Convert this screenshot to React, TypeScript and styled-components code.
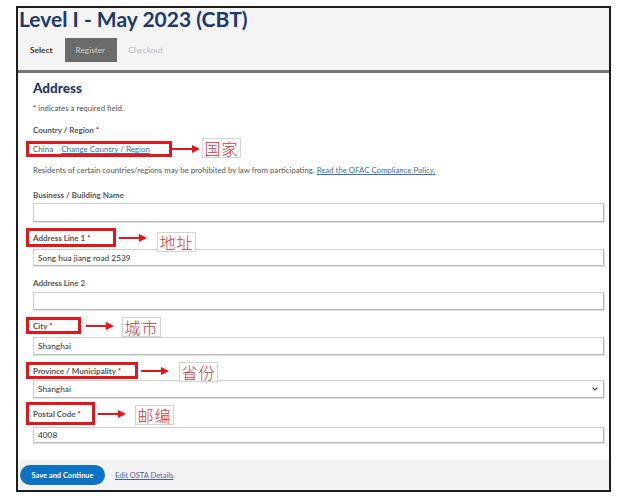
import React from "react";
import styled, { createGlobalStyle } from "styled-components";

const GlobalStyle = createGlobalStyle`
  html, body {
    margin: 0;
    padding: 0;
    background: #fff;
  }
  body {
    font-family: Lato, "Noto Sans", sans-serif;
    color: #444;
  }
`;

type TabState = "done" | "active" | "todo";

const Frame = styled.div`
  box-sizing: border-box;
  margin: 6px 0 0 16px;
  width: 595px;
  height: 486px;
  border: 2px solid #1e1e1e;
  display: flex;
  flex-direction: column;
`;

const Header = styled.header`
  background: #f4f4f4;
  padding: 0 0 8px 1px;
  border-bottom: 3px solid #777;
`;

const Title = styled.h1`
  margin: 1px 0 0;
  font-size: 21px;
  line-height: 20px;
  font-weight: 700;
  color: #1b3a6b;
`;

const Tabs = styled.nav`
  display: flex;
  margin-top: 9px;
  height: 24px;
`;

const Tab = styled.span<{ $state: TabState }>`
  padding: 0 12px 0 11px;
  line-height: 24px;
  font-size: 8.3px;
  font-weight: ${(p) => (p.$state === "done" ? 700 : 400)};
  color: ${(p) =>
    p.$state === "done" ? "#333" : p.$state === "active" ? "#d2d2d2" : "#bdbdbd"};
  background: ${(p) => (p.$state === "active" ? "#6b6b6b" : "transparent")};
`;

const Body = styled.main`
  flex: 1;
  background: #fff;
  padding: 7px 5px 0 15px;
`;

const Heading = styled.h2`
  margin: 0;
  font-size: 13.5px;
  line-height: 16px;
  font-weight: 900;
  color: #1b3a6b;
`;

const Note = styled.p<{ $mt: number }>`
  margin: ${(p) => p.$mt}px 0 0;
  font-size: 7.8px;
  line-height: 12px;
  color: #555;
  white-space: nowrap;
`;

const Req = styled.span`
  color: #d0021b;
`;

const Label = styled.div<{ $mt?: number }>`
  margin-top: ${(p) => p.$mt ?? 0}px;
  font-size: 8px;
  line-height: 12px;
  font-weight: 700;
  color: #555;
  white-space: nowrap;
`;

const Link = styled.a`
  color: #3b6fb6;
  text-decoration: underline;
  cursor: pointer;
`;

const AnnotRow = styled.div<{ $mt: number; $h: number }>`
  display: flex;
  align-items: flex-start;
  height: ${(p) => p.$h}px;
  margin-top: ${(p) => p.$mt}px;
  margin-left: -7px;
`;

const RedBox = styled.div<{ $w: number; $h: number }>`
  box-sizing: border-box;
  width: ${(p) => p.$w}px;
  height: ${(p) => p.$h}px;
  border: 3px solid #e4161c;
  padding-left: 4px;
  display: flex;
  align-items: center;
  gap: 8px;
  font-size: 8px;
  white-space: nowrap;
`;

const Value = styled.span`
  color: #555;
`;

const Arrow = styled.svg<{ $ml: number }>`
  align-self: center;
  flex: none;
  margin-left: ${(p) => p.$ml}px;
`;

const Tag = styled.span<{ $ml: number; $dy: number }>`
  box-sizing: border-box;
  flex: none;
  margin-left: ${(p) => p.$ml}px;
  margin-top: ${(p) => p.$dy}px;
  width: 39px;
  height: 20px;
  border: 1px solid #d4d4d4;
  background: #fff;
  display: flex;
  align-items: center;
  justify-content: center;
  font-family: "Noto Sans CJK SC", sans-serif;
  font-size: 16px;
  font-weight: 300;
  letter-spacing: 1px;
  color: #c9373c;
  position: relative;
  z-index: 1;
`;

const Input = styled.input<{ $mt: number; $h: number }>`
  display: block;
  box-sizing: border-box;
  width: 100%;
  height: ${(p) => p.$h}px;
  margin: ${(p) => p.$mt}px 0 0;
  padding: 0 4px;
  border: 1px solid #d0d0d0;
  border-right-color: #b9b9b9;
  border-bottom-color: #b9b9b9;
  box-shadow: 1px 1px 0 #e2e2e2;
  font-family: Lato, sans-serif;
  font-size: 8.3px;
  color: #333;
  background: #fff;
  outline: none;
`;

const SelectBox = styled.div<{ $mt: number; $h: number }>`
  box-sizing: border-box;
  height: ${(p) => p.$h}px;
  margin-top: ${(p) => p.$mt}px;
  padding: 0 5px 0 4px;
  border: 1px solid #d0d0d0;
  border-right-color: #b9b9b9;
  border-bottom-color: #b9b9b9;
  box-shadow: 1px 1px 0 #e2e2e2;
  display: flex;
  align-items: center;
  justify-content: space-between;
  font-size: 8.3px;
  color: #333;
`;

const Footer = styled.footer`
  height: 30px;
  background: #f3f3f3;
  display: flex;
  align-items: center;
  padding-left: 2px;
  gap: 10px;
`;

const PrimaryButton = styled.button`
  width: 85px;
  height: 20px;
  border: none;
  border-radius: 10px;
  background: #0b72c4;
  color: #fff;
  font-family: Lato, sans-serif;
  font-size: 7.5px;
  font-weight: 700;
  padding: 0;
`;

const FooterLink = styled.a`
  font-size: 7.5px;
  color: #4b5cad;
  text-decoration: underline;
`;

const RedArrow = ({ ml }: { ml: number }) => (
  <Arrow $ml={ml} width="28" height="8" viewBox="0 0 28 8">
    <line x1="0" y1="4" x2="21" y2="4" stroke="#e4161c" strokeWidth="2" />
    <polygon points="20,0 28,4 20,8" fill="#e4161c" />
  </Arrow>
);

type Annot = {
  w: number;
  h: number;
  mt: number;
  arrowMl: number;
  tagMl: number;
  tagDy: number;
  tag: string;
};

const Annotated = ({
  a,
  children,
}: {
  a: Annot;
  children: React.ReactNode;
}) => (
  <AnnotRow $mt={a.mt} $h={a.h}>
    <RedBox $w={a.w} $h={a.h}>{children}</RedBox>
    <RedArrow ml={a.arrowMl} />
    <Tag $ml={a.tagMl} $dy={a.tagDy}>
      {a.tag}
    </Tag>
  </AnnotRow>
);

const Chevron = () => (
  <svg width="6" height="4" viewBox="0 0 6 4">
    <path d="M0.6 0.6 L3 3 L5.4 0.6" fill="none" stroke="#444" strokeWidth="1.2" />
  </svg>
);

const App = () => (
  <>
    <GlobalStyle />
    <Frame>
      <Header>
        <Title>Level I - May 2023 (CBT)</Title>
        <Tabs>
          <Tab $state="done">Select</Tab>
          <Tab $state="active">Register</Tab>
          <Tab $state="todo">Checkout</Tab>
        </Tabs>
      </Header>

      <Body>
        <Heading>Address</Heading>
        <Note $mt={6}>
          <Req>*</Req> indicates a required field.
        </Note>

        <Label $mt={10}>
          Country / Region <Req>*</Req>
        </Label>
        <Annotated
          a={{ w: 146, h: 16, mt: 5, arrowMl: 0, tagMl: 2, tagDy: -3, tag: "国家" }}
        >
          <Value>China</Value>
          <Link>Change Country / Region</Link>
        </Annotated>

        <Note $mt={7}>
          Residents of certain countries/regions may be prohibited by law from
          participating. <Link>Read the OFAC Compliance Policy.</Link>
        </Note>

        <Label $mt={13}>Business / Building Name</Label>
        <Input $mt={2} $h={19} readOnly defaultValue="" />

        <Annotated
          a={{ w: 90, h: 19, mt: 6, arrowMl: 3, tagMl: 10, tagDy: 4, tag: "地址" }}
        >
          <Label>
            Address Line 1 <Req>*</Req>
          </Label>
        </Annotated>
        <Input $mt={2} $h={17} readOnly defaultValue="Song hua jiang road 2539" />

        <Label $mt={11}>Address Line 2</Label>
        <Input $mt={3} $h={18} readOnly defaultValue="" />

        <Annotated
          a={{ w: 55, h: 17, mt: 7, arrowMl: 5, tagMl: 8, tagDy: 0, tag: "城市" }}
        >
          <Label>
            City <Req>*</Req>
          </Label>
        </Annotated>
        <Input $mt={3} $h={18} readOnly defaultValue="Shanghai" />

        <Annotated
          a={{ w: 112, h: 17, mt: 7, arrowMl: 3, tagMl: 10, tagDy: 0, tag: "省份" }}
        >
          <Label>
            Province / Municipality <Req>*</Req>
          </Label>
        </Annotated>
        <SelectBox $mt={1} $h={18}>
          <span>Shanghai</span>
          <Chevron />
        </SelectBox>

        <Annotated
          a={{ w: 69, h: 23, mt: 4, arrowMl: 3, tagMl: 9, tagDy: 3, tag: "邮编" }}
        >
          <Label>
            Postal Code <Req>*</Req>
          </Label>
        </Annotated>
        <Input $mt={2} $h={16} readOnly defaultValue="4008" />
      </Body>

      <Footer>
        <PrimaryButton type="button">Save and Continue</PrimaryButton>
        <FooterLink>Edit OSTA Details</FooterLink>
      </Footer>
    </Frame>
  </>
);

export default App;
